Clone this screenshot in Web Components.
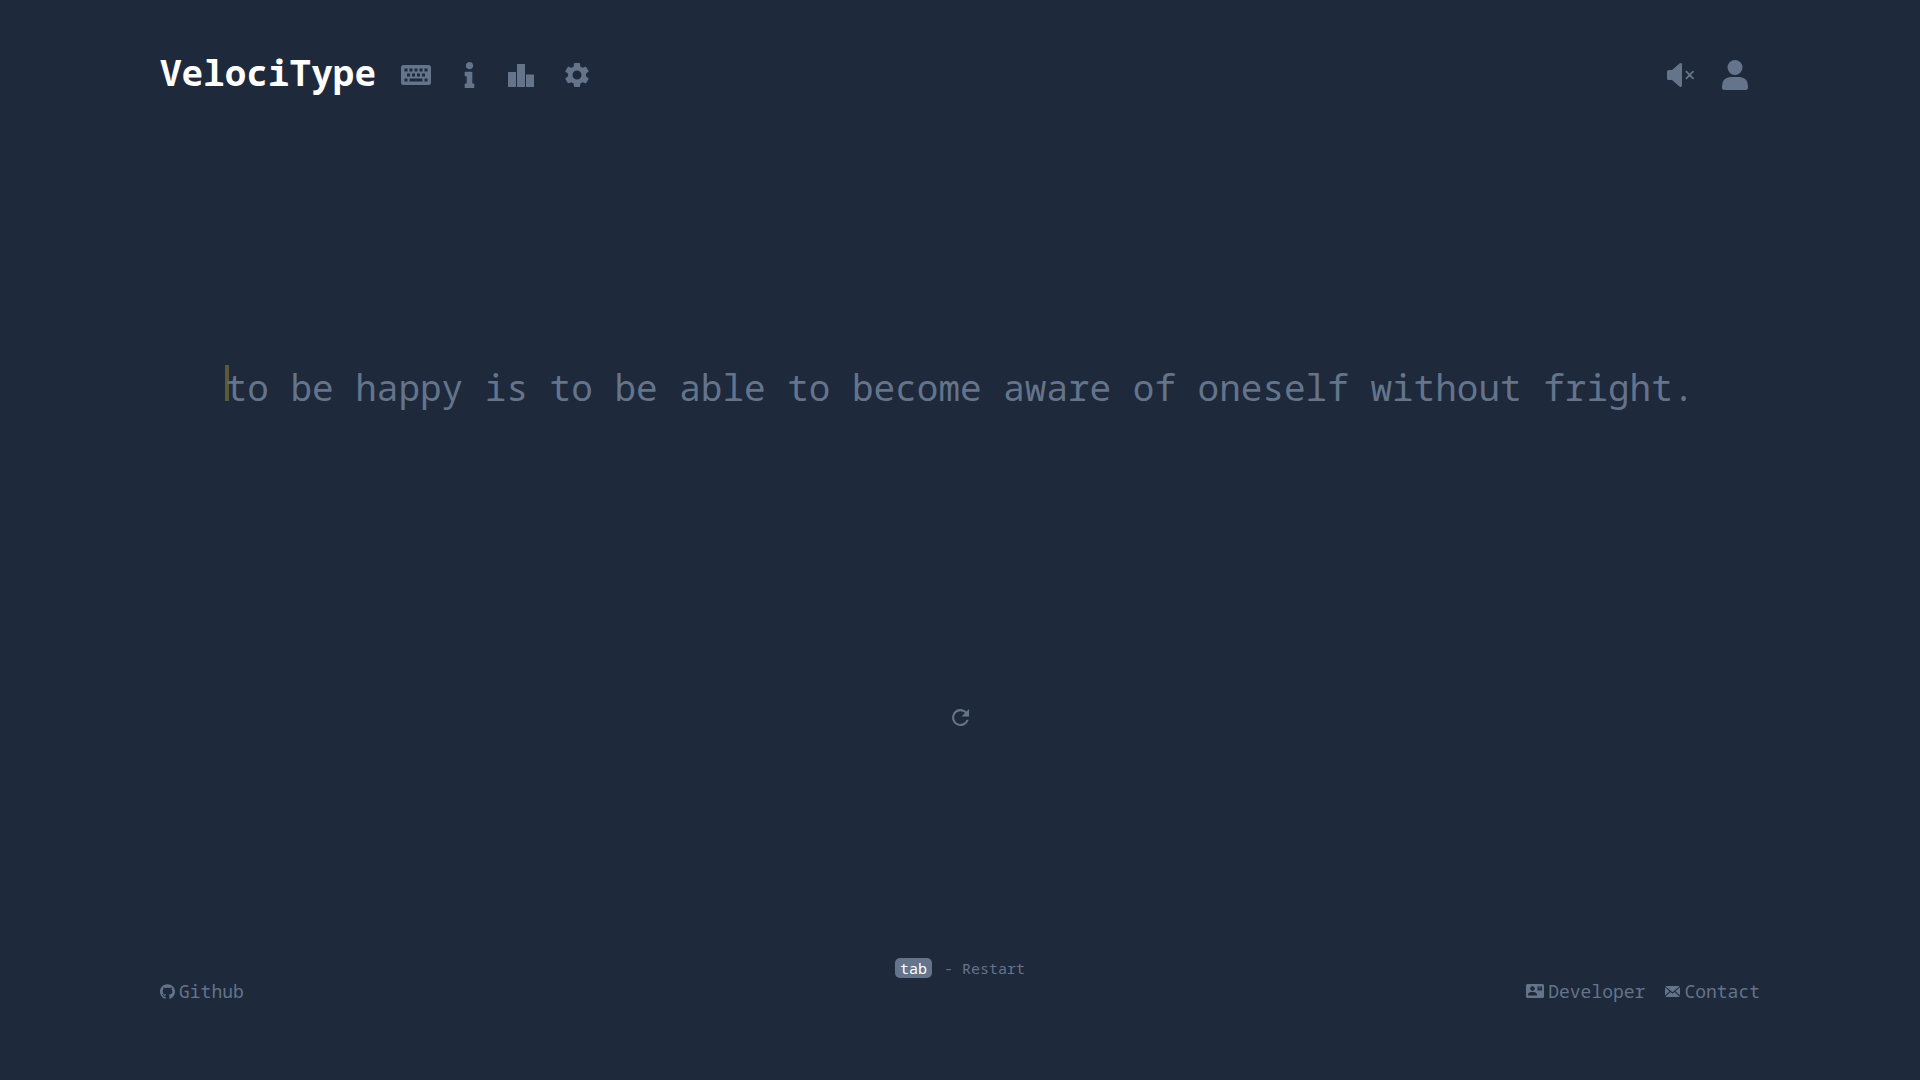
<!DOCTYPE html>
<html lang="en">
<head>
<meta charset="utf-8">
<meta name="viewport" content="width=device-width, initial-scale=1">
<title>VelociType</title>
<style>
  html, body { margin: 0; min-height: 100%; background: #1e293b; }
  body { color: #64748b; font-family: "Noto Sans Mono", "DejaVu Sans Mono", "Liberation Mono", monospace; }
</style>
</head>
<body>
<velo-app></velo-app>
<script>
const icons = {
  keyboard: ['0 0 30 20', '<path fill-rule="evenodd" d="M2.500 0h25Q30 0 30 2.500v15Q30 20 27.500 20h-25Q0 20 0 17.500v-15Q0 0 2.500 0ZM3.500 3.500v3h3v-3ZM8.500 3.500v3h3v-3ZM13.500 3.500v3h3v-3ZM18.500 3.500v3h3v-3ZM23.500 3.500v3h3v-3ZM6 8.500v3h3v-3ZM11 8.500v3h3v-3ZM16 8.500v3h3v-3ZM21 8.500v3h3v-3ZM3.500 13.500v3h3v-3ZM8.500 13.500v3h13v-3ZM23.500 13.500v3h3v-3Z"/>'],
  info: ['0 0 192 512', '<path d="M20 424.229h20V279.771H20c-11.046 0-20-8.954-20-20V212c0-11.046 8.954-20 20-20h112c11.046 0 20 8.954 20 20v212.229h20c11.046 0 20 8.954 20 20V492c0 11.046-8.954 20-20 20H20c-11.046 0-20-8.954-20-20v-47.771c0-11.046 8.954-20 20-20zM96 0C56.235 0 24 32.235 24 72s32.235 72 72 72 72-32.235 72-72S135.764 0 96 0z"/>'],
  podium: ['0 0 26 23', '<path d="M0 8.500Q0 8 .500 8H8v15H.500Q0 23 0 22.500ZM9 .500Q9 0 9.500 0h7Q17 0 17 .500V23H9ZM18 10.500h7.500q.500 0 .500.500v11.500q0 .500-.500.500H18Z"/>'],
  gear: ['2.400 2.400 19.200 19.200', '<path d="M19.140 12.940c.040-.300.060-.610.060-.940 0-.320-.020-.640-.070-.940l2.030-1.580c.180-.140.230-.410.120-.610l-1.920-3.320c-.120-.220-.370-.290-.590-.220l-2.390.960c-.500-.380-1.030-.700-1.620-.940l-.360-2.540c-.040-.240-.240-.410-.480-.410h-3.840c-.240 0-.430.170-.470.410l-.360 2.540c-.590.240-1.130.570-1.620.940l-2.390-.960c-.220-.080-.470 0-.590.220L2.740 8.870c-.120.210-.080.470.120.610l2.030 1.580c-.050.300-.090.630-.090.940s.020.640.070.940l-2.030 1.580c-.180.140-.230.410-.120.610l1.920 3.320c.120.220.370.290.590.220l2.390-.960c.500.380 1.030.700 1.620.940l.360 2.540c.050.240.240.410.480.410h3.840c.240 0 .440-.170.470-.410l.360-2.540c.590-.240 1.130-.560 1.620-.940l2.390.960c.220.080.470 0 .590-.220l1.920-3.320c.120-.220.070-.470-.120-.610zM12 15.600A3.600 3.600 0 1 1 12 8.400a3.600 3.600 0 0 1 0 7.200z"/>'],
  mute: ['0 0 27 24', '<path d="M1.500 7H5L12.500.600Q15 -.800 15 1.500v21Q15 24.800 12.500 23.400L5 17H1.500Q0 17 0 15.500v-7Q0 7 1.500 7Z"/><path d="m19.400 8.700 6.600 6.600m0-6.600-6.600 6.600" fill="none" stroke="currentColor" stroke-width="1.800" stroke-linecap="round"/>'],
  user: ['0 0 26 30', '<circle cx="13" cy="7.500" r="7.500"/><path d="M8 17h10q8 1 8 9v1.500q0 2.500-2.500 2.500h-21Q0 30 0 27.500V26q0-8 8-9Z"/>'],
  refresh: ['4 4 16 16', '<path d="M17.650 6.350A8 8 0 1 0 19.730 14h-2.080A6 6 0 1 1 12 6c1.660 0 3.140.690 4.220 1.780L13 11h7V4z"/>'],
  github: ['0 0 496 484', '<path d="M165.900 389.400c0 2-2.300 3.600-5.200 3.600-3.300.300-5.600-1.300-5.600-3.600 0-2 2.300-3.600 5.200-3.600 3-.300 5.600 1.300 5.600 3.600zM244.800 0C106.100 0 0 105.300 0 244c0 110.900 69.800 205.800 169.500 239.200 12.800 2.300 17.300-5.600 17.300-12.100 0-6.200-.300-40.400-.300-61.400 0 0-70 15-84.700-29.800 0 0-11.400-29.100-27.800-36.600 0 0-22.900-15.700 1.600-15.400 0 0 24.900 2 38.600 25.800 21.900 38.600 58.600 27.500 72.900 20.900 2.300-16 8.800-27.100 16-33.700-55.900-6.200-112.300-14.300-112.300-110.500 0-27.500 7.600-41.300 23.600-58.900-2.600-6.500-11.100-33.300 2.600-67.900 20.900-6.500 69 27 69 27 20-5.600 41.500-8.500 62.800-8.500s42.800 2.900 62.800 8.500c0 0 48.100-33.600 69-27 13.700 34.700 5.200 61.400 2.600 67.900 16 17.700 25.800 31.500 25.800 58.900 0 96.500-58.900 104.200-114.800 110.500 9.200 7.900 17 22.900 17 46.400 0 33.700-.300 75.400-.300 83.600 0 6.500 4.600 14.400 17.300 12.100C428.200 449.800 496 354.900 496 244 496 105.300 383.500 0 244.800 0z"/>'],
  card: ['0 0 18 14', '<path fill-rule="evenodd" d="M1.500 0h15Q18 0 18 1.500v11q0 1.500-1.500 1.500h-15Q0 14 0 12.500v-11Q0 0 1.500 0ZM6.500 2.300a2.300 2.300 0 1 0 .001 0ZM2 11.500h9v-.700C11 8.500 8.500 8 6.500 8S2 8.500 2 10.800ZM11.500 2.500v4h4.500v-4ZM12.500 3.500h2.500L13.750 4.700Z"/>'],
  mail: ['0 0 15 11', '<path d="M.500.500Q.700 0 1.200 0h12.600q.500 0 .700.500L7.500 6.200ZM0 1.300 4.600 5.300 0 9.600ZM15 1.300v8.300L10.400 5.300ZM5.400 6 7.500 7.700 9.600 6l4.900 4.500q-.200.500-.700.500H1.200q-.500 0-.700-.500Z"/>']
};

class VeloIcon extends HTMLElement {
  connectedCallback() {
    const [box, art] = icons[this.getAttribute('name')];
    this.attachShadow({ mode: 'open' }).innerHTML = `
      <style>
        :host { display: block; flex: none; }
        svg { display: block; width: 100%; height: 100%; overflow: visible; }
      </style>
      <svg viewBox="${box}" fill="currentColor" aria-hidden="true">${art}</svg>`;
  }
}

class VeloButton extends HTMLElement {
  connectedCallback() {
    this.attachShadow({ mode: 'open' }).innerHTML = `
      <style>
        :host { display: block; }
        button { display: flex; align-items: center; justify-content: center; padding: 0; border: 0;
          background: none; color: inherit; font: inherit; cursor: pointer; }
        button:hover { color: #e2e8f0; }
      </style>
      <button type="button" aria-label="${this.getAttribute('label')}"><slot></slot></button>`;
  }
}

class VeloLink extends HTMLElement {
  connectedCallback() {
    this.attachShadow({ mode: 'open' }).innerHTML = `
      <style>
        :host { display: block; }
        a { display: flex; align-items: center; gap: 4px; color: inherit; text-decoration: none; }
        a:hover { color: #e2e8f0; }
      </style>
      <a href="${this.getAttribute('to')}"><slot></slot></a>`;
  }
}

class VeloHeader extends HTMLElement {
  connectedCallback() {
    this.attachShadow({ mode: 'open' }).innerHTML = `
      <style>
        :host { display: block; }
        header, nav, .account { display: flex; align-items: center; }
        header { justify-content: space-between; height: 54px; }
        h1 { margin: 0; padding-bottom: 4px; font-size: 36px; line-height: 48px; font-weight: 700; }
        h1 a { color: #fff; text-decoration: none; }
        nav { gap: 25px; }
        .tools { display: flex; align-items: center; gap: 31px; }
        .account { gap: 28px; padding-right: 12px; }
        .keyboard { width: 30px; height: 20px; }
        .info { width: 15px; height: 26px; }
        .podium { width: 26px; height: 23px; }
        .gear { width: 24px; height: 24px; }
        .mute { width: 27px; height: 24px; }
        .user { width: 26px; height: 30px; }
      </style>
      <header>
        <nav>
          <h1><a href="#home">VelociType</a></h1>
          <div class="tools">
            <velo-button label="Typing test"><velo-icon class="keyboard" name="keyboard"></velo-icon></velo-button>
            <velo-button label="About"><velo-icon class="info" name="info"></velo-icon></velo-button>
            <velo-button label="Leaderboard"><velo-icon class="podium" name="podium"></velo-icon></velo-button>
            <velo-button label="Settings"><velo-icon class="gear" name="gear"></velo-icon></velo-button>
          </div>
        </nav>
        <div class="account">
          <velo-button label="Sound off"><velo-icon class="mute" name="mute"></velo-icon></velo-button>
          <velo-button label="Account"><velo-icon class="user" name="user"></velo-icon></velo-button>
        </div>
      </header>`;
  }
}

class VeloPrompt extends HTMLElement {
  connectedCallback() {
    this.attachShadow({ mode: 'open' }).innerHTML = `
      <style>
        :host { display: flex; justify-content: center; }
        p { position: relative; margin: 0; font-size: 36px; line-height: 46px; }
        .caret { position: absolute; left: -1px; top: 0; width: 4px; height: 36px; background: #5b5a34; }
        .words { position: relative; }
      </style>
      <p><span class="caret"></span><span class="words"><slot></slot></span></p>`;
  }
}

class VeloFooter extends HTMLElement {
  connectedCallback() {
    this.attachShadow({ mode: 'open' }).innerHTML = `
      <style>
        :host { display: block; }
        .hint { display: flex; justify-content: center; align-items: center; gap: 12px;
          margin-bottom: 1px; font-size: 15px; line-height: 20px; }
        kbd { padding: 0 5px; border-radius: 5px; background: #64748b; color: #fff; font: inherit; }
        footer { display: flex; justify-content: space-between; font-size: 18px; line-height: 24px; }
        .links { display: flex; gap: 20px; }
        .github { width: 15px; height: 15px; }
        .card { width: 18px; height: 14px; }
        .mail { width: 15px; height: 11px; }
      </style>
      <div class="hint"><kbd>tab</kbd><span>- Restart</span></div>
      <footer>
        <velo-link to="#github"><velo-icon class="github" name="github"></velo-icon><span>Github</span></velo-link>
        <div class="links">
          <velo-link to="#developer"><velo-icon class="card" name="card"></velo-icon><span>Developer</span></velo-link>
          <velo-link to="#contact"><velo-icon class="mail" name="mail"></velo-icon><span>Contact</span></velo-link>
        </div>
      </footer>`;
  }
}

class VeloApp extends HTMLElement {
  connectedCallback() {
    this.attachShadow({ mode: 'open' }).innerHTML = `
      <style>
        :host { display: flex; flex-direction: column; box-sizing: border-box; min-height: 100vh;
          width: 84%; max-width: 1600px; margin: 0 auto; padding: 48px 0 77px; }
        main { flex: 1; display: flex; flex-direction: column; align-items: center; padding-top: 263px; }
        .refresh { width: 17px; height: 17px; }
        .restart { margin-top: 298px; }
      </style>
      <velo-header></velo-header>
      <main>
        <velo-prompt>to be happy is to be able to become aware of oneself without fright.</velo-prompt>
        <velo-button class="restart" label="Restart"><velo-icon class="refresh" name="refresh"></velo-icon></velo-button>
      </main>
      <velo-footer></velo-footer>`;
  }
}

customElements.define('velo-icon', VeloIcon);
customElements.define('velo-button', VeloButton);
customElements.define('velo-link', VeloLink);
customElements.define('velo-header', VeloHeader);
customElements.define('velo-prompt', VeloPrompt);
customElements.define('velo-footer', VeloFooter);
customElements.define('velo-app', VeloApp);
</script>
</body>
</html>
